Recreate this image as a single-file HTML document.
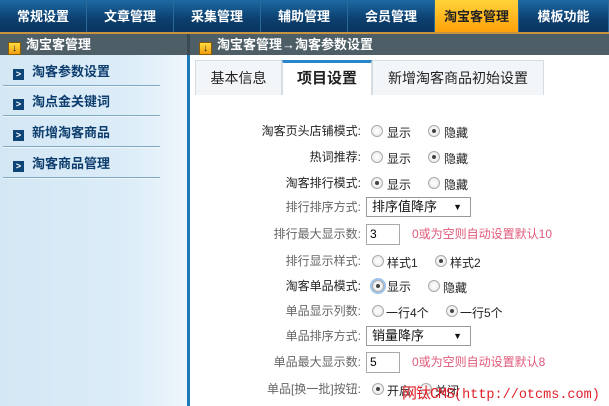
<!DOCTYPE html>
<html><head><meta charset="utf-8"><style>
*{margin:0;padding:0;box-sizing:border-box}
body{width:609px;height:406px;overflow:hidden;background:#fff;position:relative;font-family:"Liberation Sans","Noto Sans CJK SC","WenQuanYi Zen Hei",sans-serif;font-size:12px}
.a{position:absolute}
#nav{left:0;top:0;width:609px;height:32px;background:linear-gradient(#1d6aa3,#0c3f6e 60%,#0a3560)}
.ni{position:absolute;top:0;height:32px;line-height:34px;color:#fff;font-weight:bold;font-size:13px;text-align:center;width:87px;border-right:1px solid #2a6a9a}
.on{background:linear-gradient(#ffd23a,#ffa10a);color:#222}
#ol{left:0;top:32px;width:609px;height:2px;background:#c99442}
.hb{top:34px;height:21px;background:#4e5e66;color:#fff;font-weight:bold;font-size:13px;line-height:21px}
.ic{display:inline-block;width:13px;height:13px;background:linear-gradient(#ffdc40,#f2a010);border:1px solid #8a5a00;color:#222;font-size:10px;line-height:11px;text-align:center;vertical-align:-2px;margin:0 5px 0 7px}
#side{left:0;top:55px;width:187px;height:351px;background:linear-gradient(90deg,#d4e7f4,#dcedf8 70%,#eef6fb)}
#vl{left:187px;top:55px;width:3px;height:351px;background:#1e7ab4}
.si{position:absolute;left:3px;width:157px;height:27px;line-height:25px;color:#0d3d6e;font-weight:bold;font-size:13px;border-bottom:1px solid #7fa8c4;box-shadow:0 1px 0 #eef6fb}
.si b{display:inline-block;width:11px;height:11px;background:#0d4579;color:#fff;font-size:9px;line-height:11px;text-align:center;margin:0 8px 0 10px;vertical-align:-1px}
.tab{position:absolute;top:60px;height:35px;line-height:35px;text-align:center;font-size:14px;color:#222;background:#f3f6f8;border:1px solid #d6dde2;border-bottom:none}
.row{position:absolute;left:190px;width:419px;height:20px;line-height:20px}
.lb{position:absolute;right:248px;text-align:right;color:#666;font-size:12px;white-space:nowrap}
.lb.k{color:#222}
.r{position:absolute;top:4px;width:12px;height:12px;border-radius:50%;border:1px solid #aaa;background:radial-gradient(#fff,#e6e6e6)}
.r.c::after{content:"";position:absolute;left:3px;top:3px;width:4px;height:4px;border-radius:50%;background:#444}
.t{position:absolute;color:#222;white-space:nowrap}
.sel{position:absolute;top:0;width:105px;height:20px;border:1px solid #999;font-size:13px;line-height:18px;padding-left:5px;color:#111}
.sel i{position:absolute;right:8px;font-style:normal;font-size:9px}
.inp{position:absolute;top:0;width:34px;height:21px;border:1px solid #aaa;padding-left:3px;line-height:19px;font-size:12px}
.red{position:absolute;color:#e05a7a;white-space:nowrap}
</style></head><body>
<div id="nav" class="a">
<div class="ni" style="left:0">常规设置</div>
<div class="ni" style="left:87px">文章管理</div>
<div class="ni" style="left:174px">采集管理</div>
<div class="ni" style="left:261px">辅助管理</div>
<div class="ni" style="left:348px">会员管理</div>
<div class="ni on" style="left:435px;width:84px">淘宝客管理</div>
<div class="ni" style="left:519px;width:90px">模板功能</div>
</div>
<div id="ol" class="a"></div>
<div class="a hb" style="left:0;width:187px"><span class="ic" style="margin-left:8px">↓</span>淘宝客管理</div>
<div class="a" style="left:187px;top:34px;width:3px;height:21px;background:#3a4a52"></div>
<div class="a hb" style="left:190px;width:419px"><span class="ic" style="margin-left:9px">↓</span>淘宝客管理→淘客参数设置</div>
<div id="side" class="a">
<div class="si" style="top:4px"><b>&gt;</b>淘客参数设置</div>
<div class="si" style="top:34px"><b>&gt;</b>淘点金关键词</div>
<div class="si" style="top:65px"><b>&gt;</b>新增淘客商品</div>
<div class="si" style="top:96px"><b>&gt;</b>淘客商品管理</div>
</div>
<div id="vl" class="a"></div>
<div class="tab" style="left:195px;width:87px">基本信息</div>
<div class="tab" style="left:282px;width:90px;background:#fff;border-top:3px solid #2a86cc;font-weight:bold;font-size:15px;line-height:32px">项目设置</div>
<div class="tab" style="left:372px;width:172px">新增淘客商品初始设置</div>

<div class="row" style="top:121px"><span class="lb k">淘客页头店铺模式:</span><span class="r" style="left:181px"></span><span class="t" style="left:197px;top:2px">显示</span><span class="r c" style="left:238px"></span><span class="t" style="left:254px;top:2px">隐藏</span></div>
<div class="row" style="top:147px"><span class="lb k">热词推荐:</span><span class="r" style="left:181px"></span><span class="t" style="left:197px;top:2px">显示</span><span class="r c" style="left:238px"></span><span class="t" style="left:254px;top:2px">隐藏</span></div>
<div class="row" style="top:173px"><span class="lb k">淘客排行模式:</span><span class="r c" style="left:181px"></span><span class="t" style="left:197px;top:2px">显示</span><span class="r" style="left:238px"></span><span class="t" style="left:254px;top:2px">隐藏</span></div>
<div class="row" style="top:197px"><span class="lb">排行排序方式:</span><span class="sel" style="left:176px">排序值降序<i>▼</i></span></div>
<div class="row" style="top:224px"><span class="lb">排行最大显示数:</span><span class="inp" style="left:176px">3</span><span class="red" style="left:222px">0或为空则自动设置默认10</span></div>
<div class="row" style="top:251px"><span class="lb">排行显示样式:</span><span class="r" style="left:182px"></span><span class="t" style="left:197px;top:2px">样式1</span><span class="r c" style="left:245px"></span><span class="t" style="left:260px;top:2px">样式2</span></div>
<div class="row" style="top:276px"><span class="lb k">淘客单品模式:</span><span class="r c" style="left:182px;box-shadow:0 0 0 2px #9ec3ea"></span><span class="t" style="left:197px;top:1px">显示</span><span class="r" style="left:238px"></span><span class="t" style="left:253px;top:2px">隐藏</span></div>
<div class="row" style="top:301px"><span class="lb">单品显示列数:</span><span class="r" style="left:182px"></span><span class="t" style="left:196px;top:2px">一行4个</span><span class="r c" style="left:256px"></span><span class="t" style="left:270px;top:2px">一行5个</span></div>
<div class="row" style="top:326px"><span class="lb">单品排序方式:</span><span class="sel" style="left:176px">销量降序<i>▼</i></span></div>
<div class="row" style="top:352px"><span class="lb">单品最大显示数:</span><span class="inp" style="left:176px">5</span><span class="red" style="left:222px">0或为空则自动设置默认8</span></div>
<div class="row" style="top:379px"><span class="lb">单品[换一批]按钮:</span><span class="r c" style="left:182px"></span><span class="t" style="left:197px;top:2px">开启</span><span class="r" style="left:230px"></span><span class="t" style="left:245px;top:2px">关闭</span></div>
<div class="a" style="left:402px;top:382px;color:#e0202a;font-size:15px;font-family:'Liberation Mono','Noto Sans CJK SC',monospace;white-space:nowrap;letter-spacing:-1px">网钛CMS<span style="font-size:13.5px;letter-spacing:0">(http://otcms.com)</span></div>
</body></html>
